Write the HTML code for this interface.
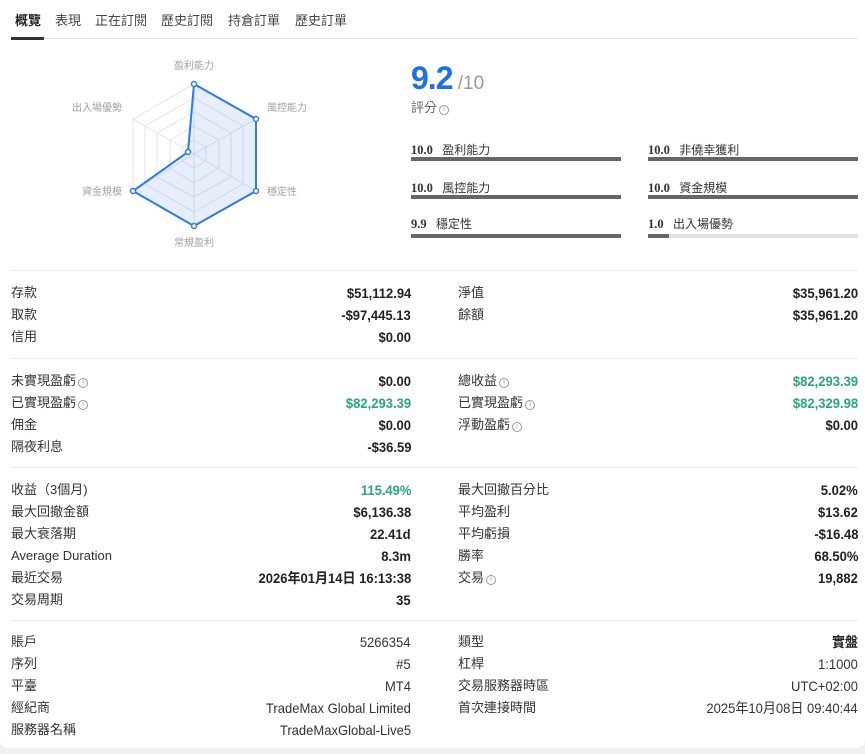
<!DOCTYPE html>
<html><head><meta charset="utf-8"><style>
*{margin:0;padding:0;box-sizing:border-box}
body{width:865px;height:754px;background:#eff0f2;font-family:"Liberation Sans","Noto Sans CJK TC",sans-serif;color:#333;position:relative;overflow:hidden}
.card{position:absolute;left:0;top:0;width:865px;height:748px;background:#fff;border-radius:0 0 8px 8px}
.tabs{position:absolute;left:11px;top:10px;font-size:13px;color:#444}
.tabs span{position:absolute;top:0;white-space:nowrap}
.tline{position:absolute;left:11px;top:38px;width:847px;height:1px;background:#e4e4e4}
.tact{position:absolute;left:11px;top:37px;width:33px;height:3px;background:#333}
.score{position:absolute;left:411px;top:60px}
.big{font-size:32px;font-weight:bold;color:#1f6fe5;letter-spacing:-1px}
.of{font-size:19px;color:#999}
.sl{position:absolute;left:411px;top:97px;font-size:13px;color:#666}
.m{position:absolute;font-size:12px;color:#333}
.m b{font-family:"Liberation Serif",serif;font-size:12.5px;margin-right:6px}
.bar{position:absolute;height:4px;background:#666}
.hr{position:absolute;left:11px;width:847px;height:1px;background:#ebebeb}
.r{position:absolute;font-size:13px;white-space:nowrap;line-height:16px}
.v{position:absolute;font-weight:bold;font-size:14px;white-space:nowrap;text-align:right;line-height:16px;color:#222;transform:scaleX(0.93);transform-origin:right center;margin-top:0px}
.n{font-weight:normal;color:#333}
.g{color:#2aa57c}
.i{display:inline-block;width:10px;height:10px;border:1px solid #999;border-radius:50%;font-size:7px;line-height:8px;text-align:center;color:#999;vertical-align:1px;margin-left:2px;font-weight:normal}
</style></head><body>
<div class="card"></div>
<div class="tabs">
<span style="left:4px;font-weight:bold;color:#222">概覽</span>
<span style="left:44px">表現</span>
<span style="left:84px">正在訂閱</span>
<span style="left:150px">歷史訂閱</span>
<span style="left:217px">持倉訂單</span>
<span style="left:284px">歷史訂單</span>
</div>
<div class="tline"></div><div class="tact"></div>

<svg style="position:absolute;left:0;top:50px" width="400" height="205" viewBox="0 50 400 205">
<g fill="none" stroke="#e2e4ea" stroke-width="1">
<polygon points="194,84 256,119 256,191 194,226 133,191 133,119"/>
<polygon points="194,98 243,126 243,184 194,212 145,184 145,126"/>
<polygon points="194,112 231,133 231,177 194,197 157,177 157,133"/>
<polygon points="194,126 219,140 219,168 194,183 170,168 170,140"/>
<polygon points="194,140 206,147 206,161 194,168 182,161 182,147"/>
<path d="M194,154L194,84M194,154L256,119M194,154L256,191M194,154L194,226M194,154L133,191M194,154L133,119"/>
</g>
<polygon points="194,84 256,119 256,191 194,226 133,191 188,152" fill="rgba(60,120,230,0.13)" stroke="#2f7ae5" stroke-width="2"/>
<g fill="#fff" stroke="#2f7ae5" stroke-width="1.5">
<circle cx="194" cy="84" r="2.5"/><circle cx="256" cy="119" r="2.5"/><circle cx="256" cy="191" r="2.5"/><circle cx="194" cy="226" r="2.5"/><circle cx="133" cy="191" r="2.5"/><circle cx="188" cy="152" r="2.5"/>
</g>
<g font-size="10" fill="#a0a0a0" font-family="Liberation Sans,Noto Sans CJK TC,sans-serif">
<text x="174" y="69">盈利能力</text>
<text x="267" y="111">風控能力</text>
<text x="267" y="195">穩定性</text>
<text x="174" y="246">常規盈利</text>
<text x="82" y="195">資金規模</text>
<text x="72" y="111">出入場優勢</text>
</g>
</svg>

<div class="score"><span class="big">9.2</span><span class="of"> /10</span></div>
<div class="sl">評分<span class="i">i</span></div>

<div class="m" style="left:411px;top:141px"><b>10.0</b> 盈利能力</div>
<div class="bar" style="left:411px;top:157px;width:210px"></div>
<div class="m" style="left:648px;top:141px"><b>10.0</b> 非僥幸獲利</div>
<div class="bar" style="left:648px;top:157px;width:210px"></div>
<div class="m" style="left:411px;top:179px"><b>10.0</b> 風控能力</div>
<div class="bar" style="left:411px;top:195px;width:210px"></div>
<div class="m" style="left:648px;top:179px"><b>10.0</b> 資金規模</div>
<div class="bar" style="left:648px;top:195px;width:210px"></div>
<div class="m" style="left:411px;top:215px"><b>9.9</b> 穩定性</div>
<div class="bar" style="left:411px;top:234px;width:210px"></div>
<div class="m" style="left:648px;top:215px"><b>1.0</b> 出入場優勢</div>
<div class="bar" style="left:648px;top:234px;width:210px;background:#dfe1e5"></div>
<div class="bar" style="left:648px;top:234px;width:21px"></div>

<div class="hr" style="top:270px"></div>

<div class="r" style="left:11px;top:285px">存款</div><div class="v" style="right:454px;top:285px">$51,112.94</div>
<div class="r" style="left:11px;top:307px">取款</div><div class="v" style="right:454px;top:307px">-$97,445.13</div>
<div class="r" style="left:11px;top:329px">信用</div><div class="v" style="right:454px;top:329px">$0.00</div>
<div class="r" style="left:458px;top:285px">淨值</div><div class="v" style="right:7px;top:285px">$35,961.20</div>
<div class="r" style="left:458px;top:307px">餘額</div><div class="v" style="right:7px;top:307px">$35,961.20</div>

<div class="hr" style="top:358px"></div>

<div class="r" style="left:11px;top:373px">未實現盈虧<span class="i">i</span></div><div class="v" style="right:454px;top:373px">$0.00</div>
<div class="r" style="left:11px;top:395px">已實現盈虧<span class="i">i</span></div><div class="v g" style="right:454px;top:395px">$82,293.39</div>
<div class="r" style="left:11px;top:417px">佣金</div><div class="v" style="right:454px;top:417px">$0.00</div>
<div class="r" style="left:11px;top:439px">隔夜利息</div><div class="v" style="right:454px;top:439px">-$36.59</div>
<div class="r" style="left:458px;top:373px">總收益<span class="i">i</span></div><div class="v g" style="right:7px;top:373px">$82,293.39</div>
<div class="r" style="left:458px;top:395px">已實現盈虧<span class="i">i</span></div><div class="v g" style="right:7px;top:395px">$82,329.98</div>
<div class="r" style="left:458px;top:417px">浮動盈虧<span class="i">i</span></div><div class="v" style="right:7px;top:417px">$0.00</div>

<div class="hr" style="top:467px"></div>

<div class="r" style="left:11px;top:482px">收益（3個月)</div><div class="v g" style="right:454px;top:482px">115.49%</div>
<div class="r" style="left:11px;top:504px">最大回撤金額</div><div class="v" style="right:454px;top:504px">$6,136.38</div>
<div class="r" style="left:11px;top:526px">最大衰落期</div><div class="v" style="right:454px;top:526px">22.41d</div>
<div class="r" style="left:11px;top:548px">Average Duration</div><div class="v" style="right:454px;top:548px">8.3m</div>
<div class="r" style="left:11px;top:570px">最近交易</div><div class="v" style="right:454px;top:570px">2026年01月14日 16:13:38</div>
<div class="r" style="left:11px;top:592px">交易周期</div><div class="v" style="right:454px;top:592px">35</div>
<div class="r" style="left:458px;top:482px">最大回撤百分比</div><div class="v" style="right:7px;top:482px">5.02%</div>
<div class="r" style="left:458px;top:504px">平均盈利</div><div class="v" style="right:7px;top:504px">$13.62</div>
<div class="r" style="left:458px;top:526px">平均虧損</div><div class="v" style="right:7px;top:526px">-$16.48</div>
<div class="r" style="left:458px;top:548px">勝率</div><div class="v" style="right:7px;top:548px">68.50%</div>
<div class="r" style="left:458px;top:570px">交易<span class="i">i</span></div><div class="v" style="right:7px;top:570px">19,882</div>

<div class="hr" style="top:620px"></div>

<div class="r" style="left:11px;top:634px">賬戶</div><div class="v n" style="right:454px;top:634px">5266354</div>
<div class="r" style="left:11px;top:656px">序列</div><div class="v n" style="right:454px;top:656px">#5</div>
<div class="r" style="left:11px;top:678px">平臺</div><div class="v n" style="right:454px;top:678px">MT4</div>
<div class="r" style="left:11px;top:700px">經紀商</div><div class="v n" style="right:454px;top:700px">TradeMax Global Limited</div>
<div class="r" style="left:11px;top:722px">服務器名稱</div><div class="v n" style="right:454px;top:722px">TradeMaxGlobal-Live5</div>
<div class="r" style="left:458px;top:634px">類型</div><div class="v" style="right:7px;top:634px">實盤</div>
<div class="r" style="left:458px;top:656px">杠桿</div><div class="v n" style="right:7px;top:656px">1:1000</div>
<div class="r" style="left:458px;top:678px">交易服務器時區</div><div class="v n" style="right:7px;top:678px">UTC+02:00</div>
<div class="r" style="left:458px;top:700px">首次連接時間</div><div class="v n" style="right:7px;top:700px">2025年10月08日 09:40:44</div>
</body></html>
